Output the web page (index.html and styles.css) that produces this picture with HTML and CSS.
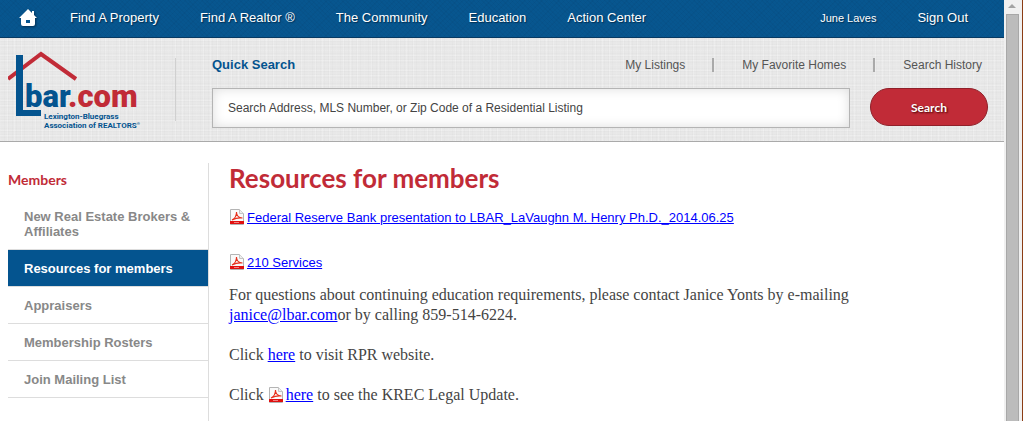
FILE: index.html
```
<!DOCTYPE html>
<html lang="en">
<head>
    <meta charset="UTF-8">
    <meta name="viewport" content="width=device-width, initial-scale=1.0">
    <title>Resources for members - LBAR.com</title>
    <link rel="stylesheet" href="styles.css">
</head>
<body>
    <!-- Shared PDF icon -->
    <svg class="hidden" aria-hidden="true">
        <symbol id="pdf" viewBox="0 0 16 16">
            <path d="M1.500.500h9l4 4v11h-13z" fill="#fafafa" stroke="#b4b4b4"/>
            <path d="M10.500.500v4h4" fill="#eee" stroke="#c4c4c4"/>
            <path d="M3 11c2-1 4.500-4 4.500-8 0 3.500 2.500 6 6 6-4-.5-7 .2-10.500 2z" fill="none" stroke="#e8301c" stroke-width="1.100"/>
            <path d="M1 12h14v3H1z" fill="#e01010"/>
            <path d="M5 13.500h5" stroke="#f28080"/>
        </symbol>
    </svg>

    <div class="page">
        <header>
            <nav class="topbar">
                <a class="home" href="#" aria-label="Home">
                    <svg width="18" height="20" viewBox="0 0 18 20">
                        <path d="M9 1L0 10h2v6q0 2 2 2h10q2 0 2-2v-6h2l-3-3V3h-2v2z" fill="#fff"/>
                        <path d="M7 12h4v3H7z" fill="#07558f"/>
                    </svg>
                </a>
                <a href="#">Find A Property</a>
                <a href="#">Find A Realtor ®</a>
                <a href="#">The Community</a>
                <a href="#">Education</a>
                <a href="#">Action Center</a>
                <a class="user" href="#">June Laves</a>
                <a href="#">Sign Out</a>
            </nav>

            <div class="search-panel">
                <a class="logo" href="#" aria-label="lbar.com">
                    <svg width="136" height="80" viewBox="0 0 136 80">
                        <path d="M0 29L33 4l35 25" fill="none" stroke="#c12b37" stroke-width="4"/>
                        <path d="M8 5h7v55h18v6H8z" fill="#04548f"/>
                        <text class="logo-name" x="17" y="57">bar<tspan class="logo-com">.com</tspan></text>
                        <text class="logo-sub" x="36" y="69">Lexington-Bluegrass</text>
                        <text class="logo-sub" x="36" y="78">Association of REALTORS<tspan class="logo-reg" dy="-3">®</tspan></text>
                    </svg>
                </a>
                <form class="search">
                    <div class="search-top">
                        <label for="quick-search">Quick Search</label>
                        <div class="search-links">
                            <a href="#">My Listings</a>
                            <a href="#">My Favorite Homes</a>
                            <a href="#">Search History</a>
                        </div>
                    </div>
                    <div class="search-row">
                        <input type="text" id="quick-search" placeholder="Search Address, MLS Number, or Zip Code of a Residential Listing">
                        <button type="button">Search</button>
                    </div>
                </form>
            </div>
        </header>

        <div class="columns">
            <aside class="sidebar">
                <h2>Members</h2>
                <ul>
                    <li><a href="#">New Real Estate Brokers &amp; Affiliates</a></li>
                    <li><a class="active" href="#">Resources for members</a></li>
                    <li><a href="#">Appraisers</a></li>
                    <li><a href="#">Membership Rosters</a></li>
                    <li><a href="#">Join Mailing List</a></li>
                </ul>
            </aside>

            <main>
                <h1>Resources for members</h1>
                <p class="doc"><svg class="pdf"><use href="#pdf"/></svg><a href="#">Federal Reserve Bank presentation to LBAR_LaVaughn M. Henry Ph.D._2014.06.25</a></p>
                <p class="doc"><svg class="pdf"><use href="#pdf"/></svg><a href="#">210 Services</a></p>
                <p>For questions about continuing education requirements, please contact Janice Yonts by e-mailing <a href="#">janice@lbar.com</a>or by calling 859-514-6224.</p>
                <p>Click <a href="#">here</a> to visit RPR website.</p>
                <p>Click <svg class="pdf"><use href="#pdf"/></svg><a href="#">here</a> to see the KREC Legal Update.</p>
            </main>
        </div>
    </div>

    <div class="scrollbar" aria-hidden="true">
        <svg width="15" height="14" viewBox="0 0 15 14"><path d="M4 8l4-4 4 4z" fill="#a3a3a3"/></svg>
        <div class="thumb"></div>
    </div>
</body>
</html>
```
FILE: styles.css
```
* {
    box-sizing: border-box;
}
body {
    display: flex;
    min-height: 100vh;
    margin: 0;
    background: #fff;
    color: #444;
    font-family: "Liberation Sans", Arial, sans-serif;
    font-size: 13px;
}
.hidden {
    display: none;
}
.page {
    display: flex;
    flex-direction: column;
    flex: 1;
}

/* Top navigation */
.topbar {
    display: flex;
    align-items: center;
    gap: 41px;
    height: 38px;
    padding: 0 36px 2px 19px;
    border-bottom: 1px solid #073a63;
    background:
        repeating-linear-gradient(45deg, rgba(0, 0, 0, .03) 0 1px, transparent 1px 3px),
        repeating-linear-gradient(-45deg, rgba(0, 0, 0, .03) 0 1px, transparent 1px 4px),
        #07568f;
}
.topbar a {
    color: #fff;
    text-decoration: none;
    white-space: nowrap;
    text-shadow: 1px 1px 1px #022f52;
}
.topbar .home {
    height: 20px;
    margin-right: -8px;
    filter: drop-shadow(1px 1px 1px #022f52);
}
.topbar .user {
    margin-left: auto;
    font-size: 11px;
}

/* Logo and quick search */
.search-panel {
    display: flex;
    height: 104px;
    padding: 12px 16px 0 8px;
    border-bottom: 1px solid #aaa;
    background:
        repeating-linear-gradient(90deg, rgba(0, 0, 0, .01) 0 1px, transparent 1px 4px),
        repeating-linear-gradient(90deg, rgba(255, 255, 255, .2) 0 1px, transparent 1px 7px),
        repeating-linear-gradient(0deg, rgba(0, 0, 0, .01) 0 1px, transparent 1px 3px),
        repeating-linear-gradient(0deg, rgba(255, 255, 255, .2) 0 1px, transparent 1px 5px),
        #e8e8e8;
}
.logo {
    width: 167px;
    height: 80px;
}
.logo-name {
    fill: #04548f;
    font-family: Roboto, "Liberation Sans", sans-serif;
    font-size: 31px;
    font-weight: 900;
}
.logo-com {
    fill: #c12b37;
}
.logo-sub {
    fill: #04548f;
    font-family: Roboto, "Liberation Sans", sans-serif;
    font-size: 8px;
    font-weight: bold;
}
.logo-reg {
    font-size: 4px;
}
.search {
    flex: 1;
    padding-left: 36px;
    margin: 8px 0 20px;
    border-left: 1px solid #d0d0d0;
}
.search-top {
    display: flex;
    justify-content: space-between;
    height: 30px;
    line-height: 14px;
}
.search-top label {
    color: #04548f;
    font-weight: bold;
}
.search-links {
    display: flex;
    height: 14px;
    padding-right: 6px;
}
.search-links a {
    color: #555;
    font-size: 12px;
    text-decoration: none;
}
.search-links a + a {
    margin-left: 27px;
    padding-left: 28px;
    border-left: 2px solid #aaa;
}
.search-row {
    display: flex;
    gap: 20px;
}
.search-row input {
    flex: 1;
    height: 40px;
    padding: 0 15px;
    border: 1px solid #b4b4b4;
    background: #fff;
    box-shadow: inset 0 0 12px #ddd;
    color: #444;
    font: 12px "Liberation Sans", Arial, sans-serif;
}
.search-row input::placeholder {
    color: #444;
    opacity: 1;
}
.search-row button {
    width: 118px;
    height: 38px;
    border: 1px solid #8f2029;
    border-radius: 19px;
    background: #c12b37;
    color: #fff;
    font: bold 12px Lato, sans-serif;
    text-shadow: 1px 1px 2px #400;
}

/* Members menu */
.columns {
    display: flex;
    flex: 1;
    padding: 21px 16px 0 8px;
}
.sidebar {
    width: 201px;
    border-right: 1px solid #ddd;
}
.sidebar h2 {
    margin: 7px 0 8px;
    color: #c12b37;
    font: bold 14px/20px Lato, sans-serif;
}
.sidebar ul {
    margin: 0;
    padding: 0;
    list-style: none;
}
.sidebar li {
    border-bottom: 1px solid #ddd;
}
.sidebar li a {
    display: block;
    padding: 11px 16px 10px;
    color: #888;
    font-weight: bold;
    line-height: 15px;
    text-decoration: none;
}
.sidebar li .active {
    background: #04548f;
    color: #fff;
}

/* Content */
main {
    flex: 1;
    padding-left: 20px;
    font: 16px/20px "Liberation Serif", "Times New Roman", serif;
}
main h1 {
    margin: 0 0 15px;
    color: #c12b37;
    font: bold 26px/30px Lato, sans-serif;
}
main p {
    max-width: 640px;
    margin: 0 0 20px;
}
main a {
    color: #00f;
}
main .doc {
    margin-bottom: 25px;
    font: 13px/20px "Liberation Sans", Arial, sans-serif;
}
main .doc + .doc {
    margin-bottom: 12px;
}
.pdf {
    width: 16px;
    height: 16px;
    margin-right: 2px;
    vertical-align: -3px;
}

/* Window scrollbar */
.scrollbar {
    display: flex;
    flex-direction: column;
    width: 19px;
    border-right: 1px solid #8c3d14;
    background: #f0f0f0;
}
.scrollbar svg {
    display: block;
}
.thumb {
    flex: 1;
    width: 13px;
    margin-left: 2px;
    border: 1px solid #a8a8a8;
    border-bottom: 0;
    background: #bcbcbc;
}
```
